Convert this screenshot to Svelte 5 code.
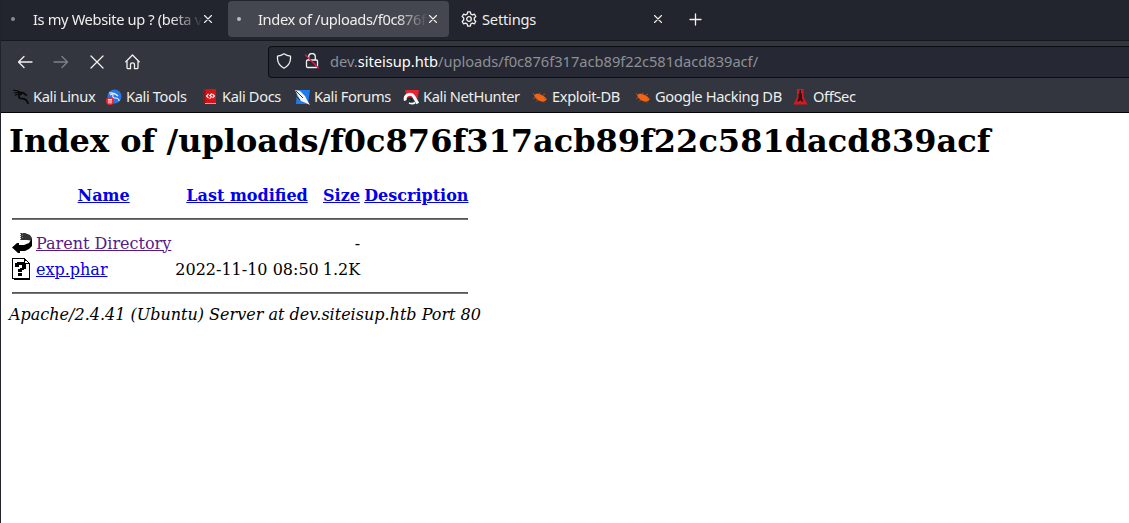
<script lang="ts">
	// Browser window showing an Apache directory listing.
	const bookmarks = [
		{ icon: 'dragon', label: 'Kali Linux', width: 93 },
		{ icon: 'tools', label: 'Kali Tools', width: 96 },
		{ icon: 'docs', label: 'Kali Docs', width: 92 },
		{ icon: 'forums', label: 'Kali Forums', width: 109 },
		{ icon: 'hunter', label: 'Kali NetHunter', width: 129 },
		{ icon: 'bug', label: 'Exploit-DB', width: 103 },
		{ icon: 'bug', label: 'Google Hacking DB', width: 158 },
		{ icon: 'offsec', label: 'OffSec', width: 80 }
	];
	const path = '/uploads/f0c876f317acb89f22c581dacd839acf';
</script>

{#snippet close()}
	<svg class="close" width="10" height="10" viewBox="0 0 10 10"><path d="M1.5 1.5l7 7M8.5 1.5l-7 7" /></svg>
{/snippet}

{#snippet bookmarkIcon(name: string)}
	<svg class="fav" width="16" height="16" viewBox="0 0 16 16">
		{#if name === 'dragon'}
			<g fill="none" stroke="#08090b">
				<path stroke-width="1.1" d="M0 1.4Q4 .8 7 3.2M1 4.3Q4 2.6 7.5 3.8M2 6.5Q4 4.8 7 4.6" />
				<path stroke-width="1.7" d="M5 3.5Q10.5 3 12 5.3L14 6.5M9 4.8C4.5 5.5 5 9.6 9 9.6C12.5 9.6 14.3 11 15.2 15" />
			</g>
		{:else if name === 'tools'}
			<circle cx="8.5" cy="7.5" r="7" fill="#2777e8" />
			<path d="M3 4q5-1 9 3M4 6q4-2 7 0M7 6q-1 3 2 3 4 0 4 3" fill="none" stroke="#e6f0ff" stroke-width="1.2" />
			<circle cx="4" cy="12" r="4" fill="#ed2630" />
			<path d="M2 10.5h4M3 10.5v4M5 10.5v4" stroke="#fff" />
		{:else if name === 'docs'}
			<path d="M1.5 0H14v14H1.5z" fill="#da1017" />
			<path d="M1.5 0h2v15h-2z" fill="#8d151c" />
			<path d="M3 14.5h11" stroke="#b8b8b8" />
			<path d="M6.5 5L4.5 7l2 2M10.5 5l2 2-2 2M9.8 4.5L7.8 6.5l1.8 1L7.5 9.8" fill="none" stroke="#fff" stroke-width="1.1" />
		{:else if name === 'forums'}
			<path d="M3 1h13l-2 14H2z" fill="#1d7bf0" />
			<path d="M1 1l5 1 5 5 2 4 3 5-4-2-5-2-3-5z" fill="#f5f7f9" />
			<path d="M2 2l7 7M0 5l6 6" stroke="#253849" />
		{:else if name === 'hunter'}
			<path d="M2 1h14l-2 12-3-4H4z" fill="#e8222e" />
			<path d="M2.5 11.5C1 7 5 4.2 9 5.6C11 6.5 12 10 14.8 14.5" fill="none" stroke="#fff" stroke-width="3" />
			<path d="M4 11.5Q6 7.6 8.5 9.5Q9.5 11.5 7 13" fill="none" stroke="#1c2026" stroke-width="1.3" />
			<path d="M6 14q4 1.5 6-.5" fill="none" stroke="#fff" stroke-width="1.8" />
		{:else if name === 'bug'}
			<path d="M2 6l3-1.500 3 .7 4 2 2.500 2.500-1 2.400-3.500.600-4-1.500-3-3z" fill="#f26416" />
			<path d="M3 6.500L1 4M7 5.500l1-2M10 6.500l3-1.500M4 8.500L1 9.500M6 10.500l-2 2M12 9.500l3 1M11 11.500l1 2" stroke="#c65416" stroke-width=".8" />
		{:else}
			<path d="M4 0h6.5v8l4 7.5H.5L4 8z" fill="#db171e" />
			<path d="M6.5 1H8v3l1 1v4l1.5 3.5h-2L7.300 11 6 12.500H4L5.500 9V5l1-1z" fill="#2a1418" />
		{/if}
	</svg>
{/snippet}

<div class="window">
	<header>
		<div class="tabs">
			<div class="tab first">
				<i class="dot"></i>
				<span class="title">Is my Website up ? (beta v</span>
				{@render close()}
			</div>
			<div class="tab active">
				<i class="dot"></i>
				<span class="title">Index of /uploads/f0c876f</span>
				{@render close()}
			</div>
			<div class="tab settings">
				<svg class="gear" width="16" height="16" viewBox="0 0 16 16">
					<path d="M6.7.8h2.6l.5 2.2 1.6.9 2.1-.7 1.3 2.3L13.3 7v2l1.5 1.5-1.3 2.3-2.1-.7-1.6.9-.5 2.2H6.7l-.5-2.2-1.600-.9-2.100.7-1.300-2.300L2.700 9V7L1.200 5.500l1.300-2.300 2.100.7L6.200 3z" />
					<circle cx="8" cy="8" r="2.3" />
				</svg>
				<span class="title">Settings</span>
				{@render close()}
			</div>
			<svg class="new-tab" width="14" height="14" viewBox="0 0 14 14"><path d="M7.5 2v11M2 7.5h11" /></svg>
		</div>

		<nav class="toolbar">
			<svg width="16" height="16" viewBox="0 0 16 16"><path d="M15 8H1.7M7 2.5L1.5 8 7 13.5" /></svg>
			<svg class="disabled" width="16" height="16" viewBox="0 0 16 16"><path d="M1 8h13.3M9 2.5L14.5 8 9 13.5" /></svg>
			<svg width="16" height="16" viewBox="0 0 16 16"><path d="M2 2l12 12M14 2L2 14" /></svg>
			<svg width="16" height="16" viewBox="0 0 16 16">
				<path d="M.8 7.7L7.5 1l6.7 6.7M2 7v6.5q0 1.2 1.2 1.2h2.3v-4q0-1.800 2-1.800t2 1.800v4h2.300q1.200 0 1.200-1.200V7" />
			</svg>
			<div class="url">
				<svg width="16" height="16" viewBox="0 0 16 16">
					<path d="M8 .8Q11 2.8 14.5 3.2V6Q14 12 8 15.2 2 12 1.5 6V3.2Q5 2.8 8 .8z" />
				</svg>
				<svg width="16" height="16" viewBox="0 0 16 16">
					<path d="M4.700 7V3.800a3.300 3.300 0 0 1 6.600 0V7M3.700 7h8.600q1.200 0 1.200 1.200v5q0 1.300-1.200 1.300H3.700q-1.200 0-1.200-1.300v-5Q2.500 7 3.700 7z" />
					<path class="slash" d="M1.500 2l13 13" />
				</svg>
				<span class="address-text">dev.<b>siteisup.htb</b>{path}/</span>
			</div>
		</nav>

		<div class="bookmarks">
			{#each bookmarks as { icon, label, width }}
				<div class="bookmark" style:width="{width}px">
					{@render bookmarkIcon(icon)}
					<span>{label}</span>
				</div>
			{/each}
		</div>
	</header>

	<main>
		<h1>Index of {path}</h1>
		<table>
			<tbody>
				<tr class="head">
					<th class="icon"></th>
					<th><a href="#name">Name</a></th>
					<th><a href="#modified">Last modified</a></th>
					<th><a href="#size">Size</a></th>
					<th><a href="#description">Description</a></th>
				</tr>
				<tr><td colspan="5"><hr /></td></tr>
				<tr class="entry">
					<td class="icon">
						<svg width="20" height="22" viewBox="0 0 20 22">
							<path d="M9 1h4l5 2 2 3-1 2.5L15 8 9 8z" fill="#333" />
							<path d="M8.5 1v7M10.5 1v6" stroke="#777" stroke-dasharray="1 1" />
							<path d="M20 6v8l-3 3-4 2H8v2H6l-6-5.5L5 11h2v2h5l5-2z" />
						</svg>
					</td>
					<td><a class="visited" href="#parent">Parent Directory</a></td>
					<td></td>
					<td class="right">-</td>
					<td></td>
				</tr>
				<tr class="entry">
					<td class="icon">
						<svg width="20" height="22" viewBox="0 0 20 22" shape-rendering="crispEdges">
							<path d="M2 21.5h15.5V6" fill="none" stroke="#000" />
							<path d="M.5.5H12L17 5v15.5H.5z" fill="#fff" stroke="#000" />
							<path d="M12.5.5V5H17" fill="none" stroke="#000" />
							<path d="M3 5h2V4h7v1h2v6h-2v1h-2v2H6v-3h2v-1h2V7H7v2H3zM6 15h4v3H6z" />
						</svg>
					</td>
					<td><a href="#exp">exp.phar</a></td>
					<td class="right">2022-11-10 08:50</td>
					<td class="right">1.2K</td>
					<td></td>
				</tr>
				<tr><td colspan="5"><hr /></td></tr>
			</tbody>
		</table>
		<address>Apache/2.4.41 (Ubuntu) Server at dev.siteisup.htb Port 80</address>
	</main>
</div>

<style>
	:global(body) {
		margin: 0;
		background: #fff;
	}
	.window {
		box-sizing: border-box;
		height: 523px;
		border-left: 1px solid #20232d;
		overflow: hidden;
	}
	header {
		box-sizing: border-box;
		height: 113px;
		background: #33363e;
		border-bottom: 1px solid #050507;
		color: #eeeeec;
		font: 14.67px/20px 'Noto Sans', sans-serif;
	}
	header svg {
		display: block;
		flex: none;
	}
	.tabs svg,
	.toolbar svg {
		fill: none;
		stroke: #f1f1ef;
		stroke-width: 1.3;
		stroke-linecap: round;
		stroke-linejoin: round;
	}
	.tabs .close {
		stroke-width: 1.1;
	}
	.tabs {
		box-sizing: border-box;
		height: 41px;
		display: flex;
		padding-top: 1px;
		background: #22252e;
		border-bottom: 1px solid #16181f;
		letter-spacing: -0.36px;
	}
	.tab {
		box-sizing: border-box;
		display: flex;
		align-items: center;
		height: 36px;
		padding: 0 11px 1px 10px;
		border-radius: 4px;
	}
	.first {
		width: 223px;
		margin-right: 4px;
	}
	.active {
		width: 221px;
		margin-right: 4px;
		background: #44474f;
	}
	.settings {
		width: 221px;
		padding-left: 8px;
		letter-spacing: -0.2px;
	}
	.dot {
		flex: none;
		width: 4px;
		height: 4px;
		margin-right: 18px;
		border-radius: 50%;
		background: #8b8c90;
	}
	.active .dot {
		margin-right: 17px;
		margin-left: -1px;
		background: #bbb;
	}
	.title {
		flex: 1;
		min-width: 0;
		overflow: hidden;
		white-space: nowrap;
	}
	.first .title,
	.active .title {
		mask-image: linear-gradient(to right, #000 calc(100% - 32px), transparent);
	}
	.gear {
		margin-right: 5px;
	}
	.new-tab {
		margin: 11px 0 0 14px;
	}
	.toolbar {
		display: flex;
		align-items: center;
		gap: 20px;
		height: 41px;
		padding-left: 16px;
	}
	.toolbar .disabled {
		opacity: 0.4;
	}
	.url {
		box-sizing: border-box;
		display: flex;
		align-items: center;
		flex: 1;
		gap: 12px;
		height: 32px;
		margin-left: 107px;
		padding: 0 0 1px 7px;
		border: 1px solid #0d0e12;
		border-right: 0;
		border-radius: 4px 0 0 4px;
		background: #262933;
	}
	.url .slash {
		stroke: #e21b50;
	}
	.address-text {
		margin-left: -2px;
		color: #8e9095;
		letter-spacing: -0.02px;
		white-space: nowrap;
	}
	.address-text b {
		color: #fff;
		font-weight: 400;
	}
	.bookmarks {
		display: flex;
		align-items: center;
		height: 30px;
		padding-left: 12px;
		letter-spacing: -0.37px;
	}
	.bookmark {
		display: flex;
		align-items: center;
		flex: none;
		gap: 4px;
		white-space: nowrap;
	}
	.bookmark span {
		padding-bottom: 2px;
	}
	main {
		padding: 8px;
		color: #000;
		font: 16px/19px 'DejaVu Serif', serif;
	}
	h1 {
		height: 38px;
		margin: 0 0 22px;
		font-size: 32px;
		line-height: 41px;
		white-space: nowrap;
	}
	table {
		border-collapse: separate;
		border-spacing: 2px;
	}
	td,
	th {
		padding: 1px;
		white-space: nowrap;
	}
	.head,
	.entry {
		height: 24px;
	}
	.icon {
		width: 20px;
	}
	.icon svg {
		display: block;
	}
	.right {
		text-align: right;
	}
	hr {
		height: 0;
		margin: 8px 0;
		border: 1px solid #555;
		border-bottom-color: #777;
	}
	a {
		color: #00e;
	}
	a.visited {
		color: #551a8b;
	}
	address {
		font-style: italic;
	}
</style>
